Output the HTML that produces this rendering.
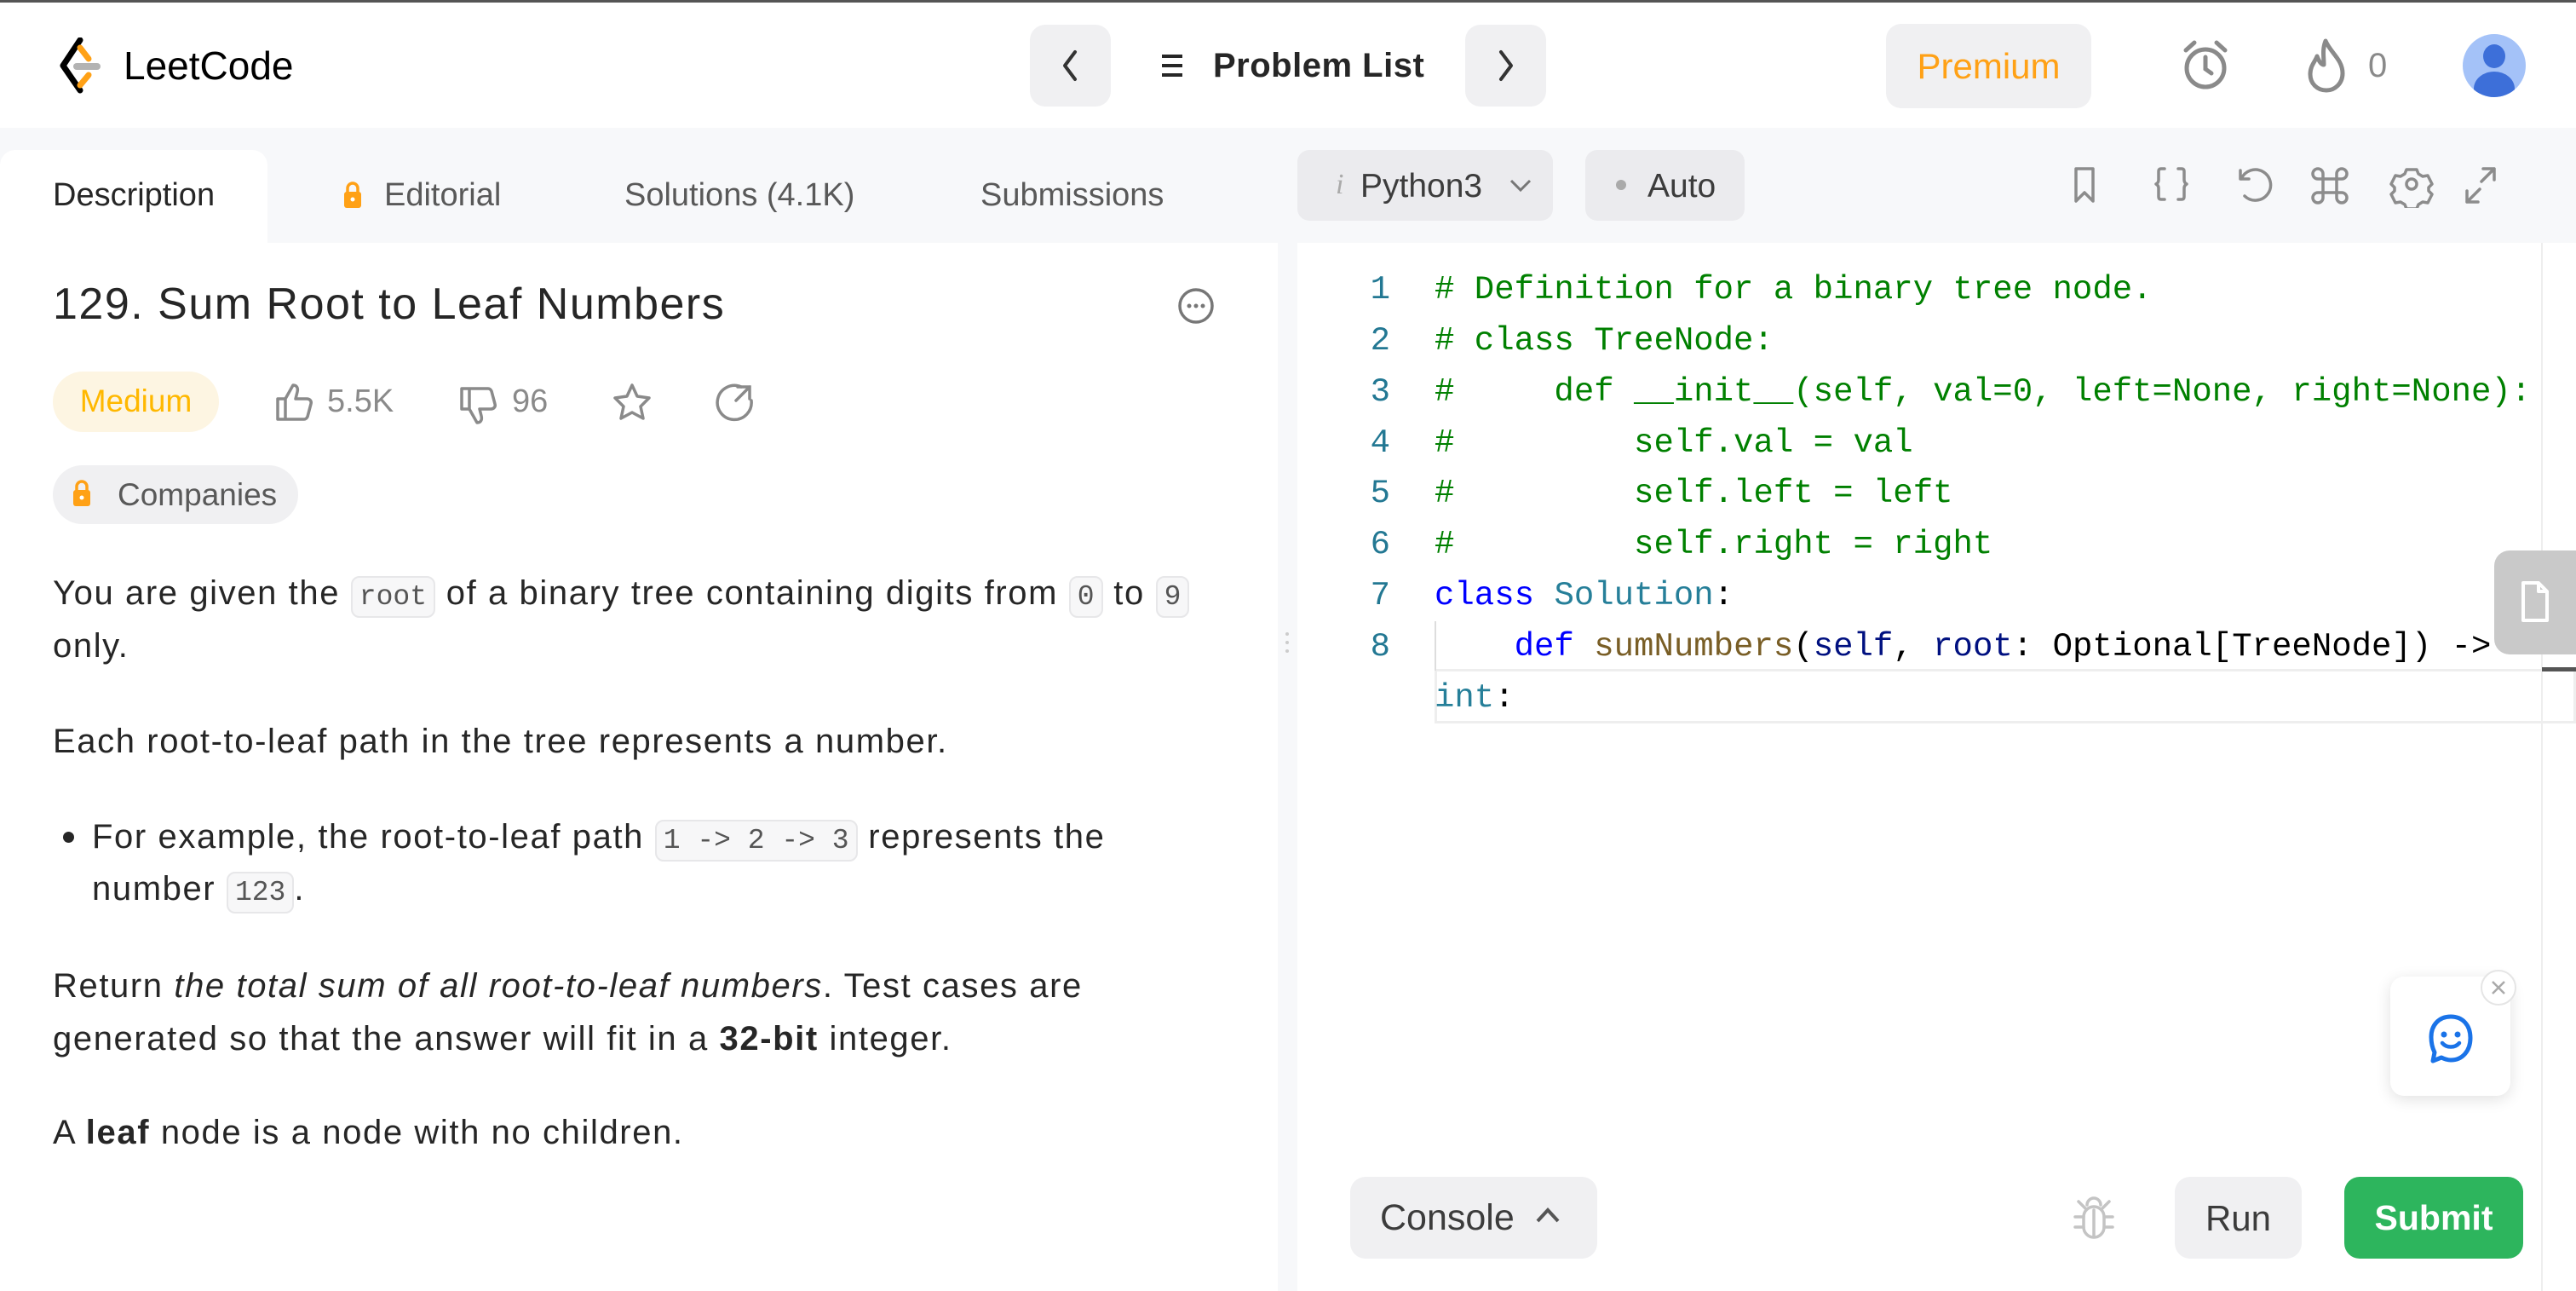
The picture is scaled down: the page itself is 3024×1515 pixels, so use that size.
<!DOCTYPE html>
<html><head><meta charset="utf-8"><style>
*{margin:0;padding:0;box-sizing:border-box}
body{width:3024px;height:1500px;position:relative;overflow:hidden;background:#f7f8fa;font-family:"Liberation Sans",sans-serif;color:#262626}
.a{position:absolute}
.btn{position:absolute;background:#f0f0f2;border-radius:18px}
.p{position:absolute;left:62px;font-size:40px;letter-spacing:1.6px;line-height:62px;color:#262626;white-space:nowrap}
code{font-family:"Liberation Mono",monospace;font-size:33px;letter-spacing:0;background:#f7f7f8;border:2px solid #e7e7e9;border-radius:10px;padding:4px 8px;color:#555}
.ln{position:absolute;left:1580px;width:52px;text-align:right;color:#237893;font-size:39px;font-family:"Liberation Mono",monospace}
.cd{position:absolute;left:1684px;font-size:39px;font-family:"Liberation Mono",monospace;white-space:pre;color:#000}
.c{color:#008000}.k{color:#0000ff}.t{color:#267f99}.f{color:#795e26}.v{color:#001080}
svg{position:absolute}
</style></head><body>
<div class="a" style="left:0;top:0;width:3024px;height:150px;background:#fff"></div>
<div class="a" style="left:0;top:0;width:3024px;height:3px;background:#555"></div>
<svg style="left:68px;top:44px" width="56" height="66" viewBox="0 0 56 66"><path d="M26 3 L6 33 L26 62" fill="none" stroke="#000" stroke-width="7" stroke-linecap="round" stroke-linejoin="round"/><path d="M26 12 L36 25 M26 56 L36 44" stroke="#ffa116" stroke-width="7" stroke-linecap="round"/><path d="M22 34 H46" stroke="#b3b3b3" stroke-width="8" stroke-linecap="round"/></svg>
<div class="a" style="left:145px;top:50px;font-size:46px;color:#000">LeetCode</div>
<div class="btn" style="left:1209px;top:29px;width:95px;height:96px"></div>
<svg style="left:1240px;top:55px" width="32" height="44" viewBox="0 0 32 44"><path d="M22 6 L10 22 L22 38" fill="none" stroke="#333" stroke-width="4" stroke-linecap="round" stroke-linejoin="round"/></svg>
<svg style="left:1362px;top:62px" width="30" height="30" viewBox="0 0 30 30"><path d="M2 4H26M2 15H26M2 26H26" stroke="#262626" stroke-width="4"/></svg>
<div class="a" style="left:1424px;top:55px;font-size:40px;font-weight:bold;letter-spacing:0.5px;color:#262626">Problem List</div>
<div class="btn" style="left:1720px;top:29px;width:95px;height:96px"></div>
<svg style="left:1752px;top:55px" width="32" height="44" viewBox="0 0 32 44"><path d="M10 6 L22 22 L10 38" fill="none" stroke="#333" stroke-width="4" stroke-linecap="round" stroke-linejoin="round"/></svg>
<div class="btn" style="left:2214px;top:28px;width:241px;height:99px"></div>
<div class="a" style="left:2214px;top:54px;width:241px;text-align:center;font-size:42px;color:#ffa116">Premium</div>
<svg style="left:2558px;top:45px" width="62" height="64" viewBox="0 0 62 64"><circle cx="31" cy="35" r="22" fill="none" stroke="#8a8a8a" stroke-width="5"/><path d="M31 22V36L38 41M8 14L18 5M54 14L44 5" fill="none" stroke="#8a8a8a" stroke-width="5" stroke-linecap="round"/></svg>
<svg style="left:2706px;top:44px" width="50" height="66" viewBox="0 0 50 66"><path d="M24 4 C30 18 44 26 44 42 C44 54 35 62 25 62 C14 62 6 54 6 43 C6 33 12 28 14 22 C17 30 20 32 22 32 C22 22 20 14 24 4Z" fill="none" stroke="#8a8a8a" stroke-width="5" stroke-linejoin="round"/></svg>
<div class="a" style="left:2780px;top:55px;font-size:40px;color:#8a8a8a">0</div>
<div class="a" style="left:2891px;top:40px;width:74px;height:74px;border-radius:50%;background:#a4c2f8;overflow:hidden">
<div class="a" style="left:24px;top:12px;width:26px;height:28px;border-radius:50%;background:#3d6fd9"></div>
<div class="a" style="left:13px;top:44px;width:48px;height:40px;border-radius:50%;background:#3d6fd9"></div></div>
<div class="a" style="left:0;top:176px;width:314px;height:120px;background:#fff;border-radius:18px 18px 0 0"></div>
<div class="a" style="left:62px;top:208px;font-size:38px;color:#262626">Description</div>
<svg style="left:402px;top:212px" width="24" height="34" viewBox="0 0 24 34"><path d="M6 14V9a6 6 0 0 1 12 0v5" fill="none" stroke="#ffa116" stroke-width="3.5"/><rect x="2" y="13" width="20" height="19" rx="3" fill="#ffa116"/><circle cx="12" cy="22" r="2.5" fill="#fff"/></svg>
<div class="a" style="left:451px;top:208px;font-size:38px;color:#595959">Editorial</div>
<div class="a" style="left:733px;top:208px;font-size:38px;color:#595959">Solutions (4.1K)</div>
<div class="a" style="left:1151px;top:208px;font-size:38px;color:#595959">Submissions</div>
<div class="a" style="left:0;top:285px;width:1500px;height:1230px;background:#fff"></div>
<div class="a" style="left:62px;top:327px;font-size:52px;letter-spacing:1.5px;color:#262626">129. Sum Root to Leaf Numbers</div>
<svg style="left:1381px;top:336px" width="46" height="46" viewBox="0 0 46 46"><circle cx="23" cy="23" r="19" fill="none" stroke="#777" stroke-width="3.5"/><circle cx="15" cy="23" r="2.5" fill="#777"/><circle cx="23" cy="23" r="2.5" fill="#777"/><circle cx="31" cy="23" r="2.5" fill="#777"/></svg>
<div class="a" style="left:62px;top:436px;width:195px;height:71px;border-radius:36px;background:#fdf5e2"></div>
<div class="a" style="left:62px;top:450px;width:195px;text-align:center;font-size:37px;color:#ffb800">Medium</div>
<svg style="left:322px;top:448px" width="46" height="48" viewBox="0 0 46 48"><path d="M4 20h9v24H4zM13 20l9-16c5 0 6 4 5 8l-2 8h13c4 0 6 3 5 6l-4 15c-1 2-2 3-4 3H13" fill="none" stroke="#8a8a8a" stroke-width="3.5" stroke-linejoin="round"/></svg>
<div class="a" style="left:384px;top:450px;font-size:38px;color:#8a8a8a">5.5K</div>
<svg style="left:538px;top:452px" width="46" height="48" viewBox="0 0 46 48"><path d="M4 4h9v24H4zM13 28l9 16c5 0 6-4 5-8l-2-8h13c4 0 6-3 5-6l-4-15c-1-2-2-3-4-3H13" fill="none" stroke="#8a8a8a" stroke-width="3.5" stroke-linejoin="round"/></svg>
<div class="a" style="left:601px;top:450px;font-size:38px;color:#8a8a8a">96</div>
<svg style="left:718px;top:448px" width="48" height="48" viewBox="0 0 48 48"><path d="M24 4l6 13 14 2-10 10 3 14-13-7-13 7 3-14L4 19l14-2z" fill="none" stroke="#8a8a8a" stroke-width="3.5" stroke-linejoin="round"/></svg>
<svg style="left:840px;top:448px" width="46" height="48" viewBox="0 0 46 48"><path d="M30 6A20 20 0 1 0 42 22" fill="none" stroke="#8a8a8a" stroke-width="3.5" stroke-linecap="round"/><path d="M26 6H40V20M40 6L24 22" fill="none" stroke="#8a8a8a" stroke-width="3.5" stroke-linecap="round"/></svg>
<div class="a" style="left:62px;top:546px;width:288px;height:69px;border-radius:35px;background:#f0f0f2"></div>
<svg style="left:84px;top:562px" width="24" height="34" viewBox="0 0 24 34"><path d="M6 14V9a6 6 0 0 1 12 0v5" fill="none" stroke="#ffa116" stroke-width="3.5"/><rect x="2" y="13" width="20" height="19" rx="3" fill="#ffa116"/><circle cx="12" cy="22" r="2.5" fill="#fff"/></svg>
<div class="a" style="left:138px;top:560px;font-size:37px;color:#595959">Companies</div>
<div class="p" style="top:665px">You are given the <code>root</code> of a binary tree containing digits from <code>0</code> to <code>9</code></div>
<div class="p" style="top:727px">only.</div>
<div class="p" style="top:839px">Each root-to-leaf path in the tree represents a number.</div>
<div class="a" style="left:74px;top:976px;width:13px;height:13px;border-radius:50%;background:#262626"></div>
<div class="p" style="left:108px;top:951px">For example, the root-to-leaf path <code>1 -&gt; 2 -&gt; 3</code> represents the</div>
<div class="p" style="left:108px;top:1012px">number <code>123</code>.</div>
<div class="p" style="top:1126px">Return <i>the total sum of all root-to-leaf numbers</i>. Test cases are</div>
<div class="p" style="top:1188px">generated so that the answer will fit in a <b>32-bit</b> integer.</div>
<div class="p" style="top:1298px">A <b>leaf</b> node is a node with no children.</div>
<div class="a" style="left:1509px;top:742px;width:4px;height:4px;background:#ccc;border-radius:2px;box-shadow:0 10px 0 #ccc,0 20px 0 #ccc"></div>
<div class="btn" style="left:1523px;top:176px;width:300px;height:83px;background:#ebebee;border-radius:14px"></div>
<div class="a" style="left:1568px;top:198px;font-size:34px;color:#aaa;font-style:italic;font-family:'Liberation Serif',serif">i</div>
<div class="a" style="left:1597px;top:197px;font-size:39px;color:#3c3c3c">Python3</div>
<svg style="left:1770px;top:208px" width="30" height="20" viewBox="0 0 30 20"><path d="M4 4L15 15L26 4" fill="none" stroke="#777" stroke-width="3"/></svg>
<div class="btn" style="left:1861px;top:176px;width:187px;height:83px;background:#ebebee;border-radius:14px"></div>
<div class="a" style="left:1897px;top:211px;width:12px;height:12px;border-radius:50%;background:#aaa"></div>
<div class="a" style="left:1934px;top:197px;font-size:39px;color:#3c3c3c">Auto</div>
<svg style="left:2425px;top:192px" width="530" height="52" viewBox="0 0 530 52" fill="none" stroke="#8c8c8c" stroke-width="3.5" stroke-linecap="round" stroke-linejoin="round">
<path d="M12 6h20v38l-10-10-10 10z"/>
<path d="M116 6h-4c-2 0-3 1-3 3v10c0 2-1 4-3 5 2 1 3 3 3 5v10c0 2 1 3 3 3h4M132 6h4c2 0 3 1 3 3v10c0 2 1 4 3 5-2 1-3 3-3 5v10c0 2-1 3-3 3h-4"/>
<path d="M206 18a18 18 0 1 1 4 20M205 8v10h10"/>
<path d="M302 18h16v16h-16zM302 18v-6a6 6 0 1 0-6 6h6M318 18v-6a6 6 0 1 1 6 6h-6M302 34v6a6 6 0 1 1-6-6h6M318 34v6a6 6 0 1 0 6-6h-6"/>
<circle cx="406" cy="24" r="6"/><path d="M400 7h12l2 5 5 3 6-1 5 10-4 4v4l4 4-5 10-6-1-5 3-2 5h-12l-2-5-5-3-6 1-5-10 4-4v-4l-4-4 5-10 6 1 5-3z"/>
<path d="M490 6h13v13M503 6l-15 15M484 45h-13v-13M471 45l15-15"/>
</svg>
<div class="a" style="left:1523px;top:285px;width:1501px;height:1230px;background:#fff"></div>
<div class="a" style="left:2983px;top:285px;width:2px;height:1230px;background:#eee"></div>
<div class="a" style="left:1684px;top:785px;width:1340px;height:64px;border:3px solid #eee"></div>
<div class="a" style="left:1684px;top:729px;width:2px;height:58px;background:#ddd"></div>
<div class="a" style="left:2984px;top:783px;width:40px;height:5px;background:#555"></div>
<div class="ln" style="top:318px">1</div><div class="cd c" style="top:318px"># Definition for a binary tree node.</div>
<div class="ln" style="top:378px">2</div><div class="cd c" style="top:378px"># class TreeNode:</div>
<div class="ln" style="top:438px">3</div><div class="cd c" style="top:438px">#     def __init__(self, val=0, left=None, right=None):</div>
<div class="ln" style="top:498px">4</div><div class="cd c" style="top:498px">#         self.val = val</div>
<div class="ln" style="top:557px">5</div><div class="cd c" style="top:557px">#         self.left = left</div>
<div class="ln" style="top:617px">6</div><div class="cd c" style="top:617px">#         self.right = right</div>
<div class="ln" style="top:677px">7</div><div class="cd" style="top:677px"><span class="k">class</span> <span class="t">Solution</span>:</div>
<div class="ln" style="top:737px">8</div><div class="cd" style="top:737px">    <span class="k">def</span> <span class="f">sumNumbers</span>(<span class="v">self</span>, <span class="v">root</span>: Optional[TreeNode]) -&gt;</div>
<div class="cd" style="top:797px"><span class="t">int</span>:</div>
<div class="a" style="left:2928px;top:646px;width:96px;height:122px;background:#c9c9c9;border-radius:18px 0 0 18px"></div>
<svg style="left:2958px;top:680px" width="36" height="52" viewBox="0 0 36 52"><path d="M4 4h18l10 10v34H4z M22 4v10h10" fill="none" stroke="#fff" stroke-width="4" stroke-linejoin="round"/></svg>
<div class="a" style="left:2806px;top:1146px;width:141px;height:140px;background:#fff;border-radius:16px;box-shadow:0 4px 18px rgba(0,0,0,.12)"></div>
<div class="a" style="left:2912px;top:1138px;width:42px;height:42px;border-radius:50%;background:#fff;border:2px solid #e5e5e5"></div>
<svg style="left:2922px;top:1148px" width="22" height="22" viewBox="0 0 22 22"><path d="M4 4L18 18M18 4L4 18" stroke="#aaa" stroke-width="2.5"/></svg>
<svg style="left:2846px;top:1188px" width="62" height="62" viewBox="0 0 62 62"><path d="M31 5C17 5 8 15 8 29c0 8 2 14 4 18l-2 10 10-4c4 2 7 3 11 3 14 0 23-11 23-26S45 5 31 5z" fill="none" stroke="#1a73e8" stroke-width="5" stroke-linejoin="round"/><circle cx="23" cy="26" r="3.5" fill="#1a73e8"/><circle cx="39" cy="26" r="3.5" fill="#1a73e8"/><path d="M21 36c5 6 15 6 20 0" fill="none" stroke="#1a73e8" stroke-width="4.5" stroke-linecap="round"/></svg>
<div class="btn" style="left:1585px;top:1381px;width:290px;height:96px;background:#f0f0f2"></div>
<div class="a" style="left:1620px;top:1405px;font-size:43px;color:#3c3c3c">Console</div>
<svg style="left:1800px;top:1414px" width="34" height="24" viewBox="0 0 34 24"><path d="M5 19L17 6L29 19" fill="none" stroke="#555" stroke-width="4"/></svg>
<svg style="left:2432px;top:1402px" width="52" height="56" viewBox="0 0 52 56" fill="none" stroke="#c4c4c4" stroke-width="3.5" stroke-linecap="round"><path d="M18 12a8 8 0 0 1 16 0"/><rect x="14" y="14" width="24" height="36" rx="12"/><path d="M26 18v30M14 26H4M38 26h10M14 38H4M38 38h10M16 16L8 8M36 16l8-8"/></svg>
<div class="btn" style="left:2553px;top:1381px;width:149px;height:96px;background:#f0f0f2"></div>
<div class="a" style="left:2553px;top:1406px;width:149px;text-align:center;font-size:42px;color:#3c3c3c">Run</div>
<div class="btn" style="left:2752px;top:1381px;width:210px;height:96px;background:#2db55d"></div>
<div class="a" style="left:2752px;top:1406px;width:210px;text-align:center;font-size:41px;color:#fff;font-weight:bold">Submit</div>
</body></html>
